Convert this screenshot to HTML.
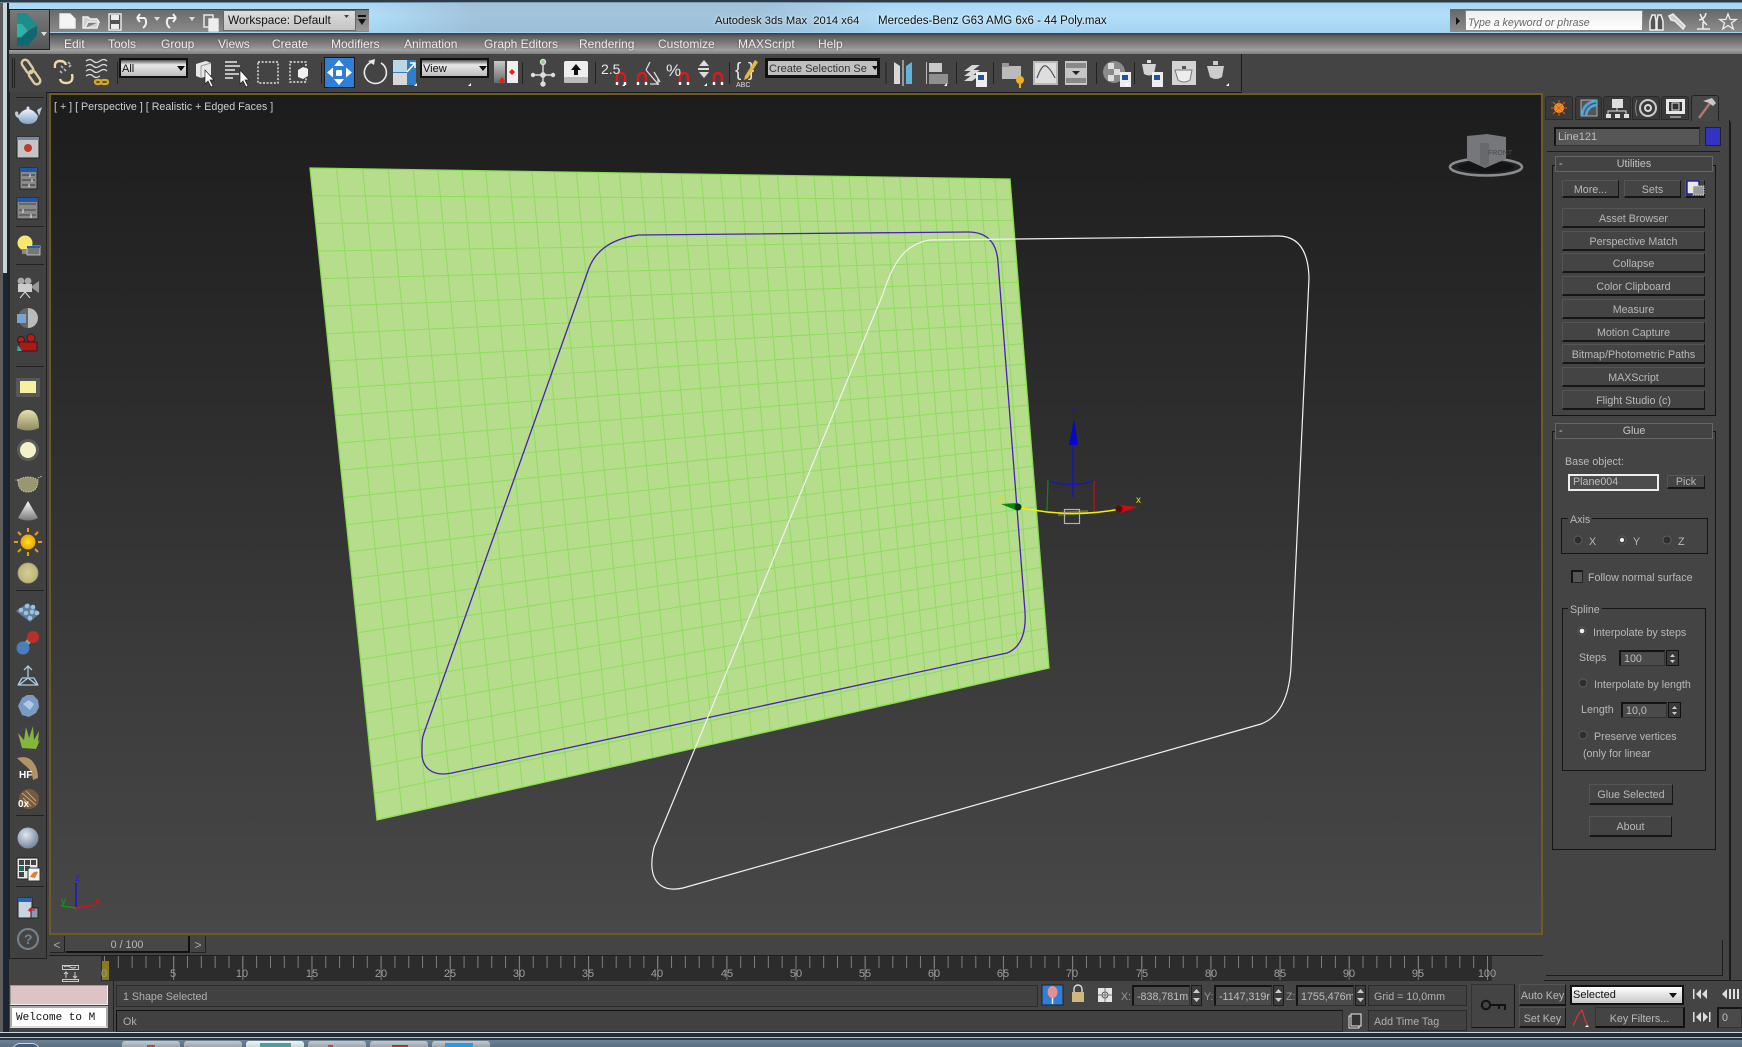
<!DOCTYPE html>
<html><head><meta charset="utf-8"><title>3ds Max</title>
<style>
html,body{margin:0;padding:0;background:#444;}
#r{position:relative;width:1742px;height:1047px;overflow:hidden;background:#444;font-family:"Liberation Sans",sans-serif;font-size:10.7px;color:#b8b8b8;}
#r div{position:absolute;box-sizing:border-box;}
.t{white-space:nowrap;line-height:14px;height:14px;margin-top:1px;}
#r .m{color:#ececec;font-size:12px;top:37px;text-shadow:0 0 2px #555;margin-top:0;}
.b{background:#444;border-top:1px solid #555;border-left:1px solid #555;border-right:1px solid #161616;border-bottom:2px solid #161616;text-align:center;white-space:nowrap;color:#b8b8b8;padding-top:2px;}
.f{background:#4a4a4a;border:1px solid #333;border-top:2px solid #141414;border-left:2px solid #141414;white-space:nowrap;color:#bdbdbd;padding-left:3px;overflow:hidden;}
.s{background:#414141;border:1px solid #2b2b2b;white-space:nowrap;color:#b0b0b0;padding-left:6px;line-height:19px;padding-top:1px;}
.dd{background:linear-gradient(#555 0,#e8e8e8 30%,#bcbcbc 100%);border:2px solid #111;color:#111;white-space:nowrap;padding-left:1px;padding-top:2px;overflow:hidden;}
.h{border:1px solid #666;background:#434343;text-align:center;color:#c4c4c4;line-height:15px;}
.g{border:1px solid #151515;}
.l{color:#9f9f9f;font-size:11px;top:966px;width:30px;text-align:center;}
.sep{background:#222;}
</style></head><body>
<div id="r">
<!-- title bar -->
<div style="left:0;top:0;width:1742px;height:33px;background:linear-gradient(#2c3c48 0,#2c3c48 2px,#a9d7f4 3px,#b2def9 16px,#a4d3f1 32px)"></div>
<div style="left:370px;top:2px;width:520px;height:30px;background:linear-gradient(90deg,rgba(150,175,195,0) 0,rgba(150,175,195,.55) 20%,rgba(150,175,195,.55) 75%,rgba(150,175,195,0) 100%)"></div>
<div class="t" style="left:715px;top:13px;font-size:11.2px;color:#111;text-shadow:0 0 3px #fff">Autodesk 3ds Max&nbsp; 2014 x64</div>
<div class="t" style="left:878px;top:13px;font-size:11.5px;color:#111;text-shadow:0 0 3px #fff">Mercedes-Benz G63 AMG 6x6 - 44 Poly.max</div>
<!-- left frame -->
<div style="left:0;top:3px;width:3px;height:1030px;background:#5c5c5c"></div>
<div style="left:3px;top:3px;width:4px;height:270px;background:#c9d3da"></div>
<div style="left:3px;top:273px;width:4px;height:760px;background:#1d2636"></div>
<div style="left:7px;top:3px;width:2px;height:1030px;background:#222"></div>
<!-- quick access -->
<div style="left:49px;top:9px;width:320px;height:23px;background:linear-gradient(#6b6b6b,#8a8a8a);border-top:1px solid #444"></div>
<div class="dd" style="left:223px;top:10px;width:133px;height:21px;border:1px solid #666;background:linear-gradient(#ddd,#c4c4c4);font-size:11.8px;line-height:19px;padding-left:4px;padding-top:0">Workspace: Default</div>
<div style="left:356px;top:10px;width:13px;height:21px;background:linear-gradient(#777,#999)"></div>
<!-- search strip -->
<div style="left:1450px;top:9px;width:292px;height:23px;background:linear-gradient(#666,#8e8e8e)"></div>
<div style="left:1465px;top:10px;width:178px;height:21px;background:linear-gradient(#eee,#fff);border:1px solid #888"></div>
<div class="t" style="left:1468px;top:15px;font-style:italic;color:#666;font-size:10.6px">Type a keyword or phrase</div>
<!-- menu bar -->
<div style="left:9px;top:33px;width:1733px;height:21px;background:linear-gradient(#3a3a3a 0,#5e5e5e 3px,#8a8a8a 13px,#a0a0a0 17px,#7e7e7e 21px)"></div>
<div class="t m" style="left:64px">Edit</div><div class="t m" style="left:108px">Tools</div><div class="t m" style="left:161px">Group</div><div class="t m" style="left:218px">Views</div><div class="t m" style="left:272px">Create</div><div class="t m" style="left:331px">Modifiers</div><div class="t m" style="left:404px">Animation</div><div class="t m" style="left:484px">Graph Editors</div><div class="t m" style="left:579px">Rendering</div><div class="t m" style="left:658px">Customize</div><div class="t m" style="left:738px">MAXScript</div><div class="t m" style="left:818px">Help</div>
<!-- app button -->
<div style="left:9px;top:9px;width:41px;height:41px;background:linear-gradient(#7a7a7a,#565656);border:1px solid #222"></div>
<!-- main toolbar -->
<div style="left:9px;top:54px;width:1233px;height:38px;background:#444;border-right:1px solid #1a1a1a;border-bottom:1px solid #161616"></div>
<div style="left:9px;top:91px;width:1733px;height:3px;background:#444;"></div>
<div style="left:9px;top:92px;width:1233px;height:1px;background:#161616"></div>
<div class="dd" style="left:119px;top:58px;width:69px;height:20px;line-height:15px;font-size:11px">All</div>
<div style="left:324px;top:57px;width:31px;height:31px;background:#2f7fd8;border:1px solid #1a1a1a"></div>
<div class="dd" style="left:420px;top:58px;width:69px;height:20px;line-height:15px;font-size:11px">View</div>
<div class="dd" style="left:765px;top:58px;width:115px;height:20px;border:3px solid #111;background:#c0c0c0;font-size:11px;line-height:13px;color:#333">Create Selection Se</div>
<!-- left bar -->
<div style="left:9px;top:92px;width:38px;height:867px;background:#414141;border-right:1px solid #222;border-bottom:1px solid #222;border-left:1px solid #222"></div>
<div class="sep" style="left:16px;top:97px;width:28px;height:1px"></div>
<div class="sep" style="left:16px;top:226px;width:28px;height:1px"></div>
<div class="sep" style="left:16px;top:264px;width:28px;height:1px"></div>
<div class="sep" style="left:16px;top:366px;width:28px;height:1px"></div>
<div class="sep" style="left:16px;top:590px;width:28px;height:1px"></div>
<div class="sep" style="left:16px;top:815px;width:28px;height:1px"></div>
<div class="sep" style="left:16px;top:886px;width:28px;height:1px"></div>
<!-- viewport -->
<div style="left:49px;top:93px;width:1494px;height:842px;border:2px solid #6f5b20;background:linear-gradient(#1c1c1c 0,#2e2e2e 40%,#3c3c3c 70%,#484848 100%)"></div>
<div class="t" style="left:54px;top:99px;color:#cfcfcf;font-size:10.7px">[ + ] [ Perspective ] [ Realistic + Edged Faces ]</div>
<svg style="position:absolute;left:0;top:0" width="1742" height="1047" viewBox="0 0 1742 1047">
<polygon points="310,168 1010,179 1049,668 377,820" fill="#b5dd8c" stroke="#86e04c" stroke-width="1.3"/>
<g id="grid" stroke="#8fdc5e" stroke-width="1" fill="none"></g>
<path d="M639 235 L968 232 Q996 232 998 262 L1025 612 Q1027 645 1007 653 L452 773 C432 777 421 768 422 750 C422 742 422 738 424 733 L589 268 Q600 240 639 235 Z" fill="none" stroke="#4a1fb8" stroke-width="1.3"/>
<path d="M930 240 L1278 236 Q1308 236 1309 278 L1291 667 Q1288 714 1261 724 L683 888 C660 893 648 880 653 852 C654 848 654 846 655 845 L883 294 C893 262 905 244 930 240 Z" fill="none" stroke="#f2f2f2" stroke-width="1.2"/>
<!-- gizmo -->
<path d="M1048 481 Q1072 488 1094 481" fill="none" stroke="#1414c8" stroke-width="1.3"/>
<path d="M1047 512 L1048 480" stroke="#0a8a0a" stroke-width="1.3"/><path d="M1094 513 L1094 481" stroke="#c80e0e" stroke-width="1.3"/>
<path d="M1058 512 L1088 510 L1088 514 L1058 516 Z" fill="#6b6a28"/>
<path d="M1020 508 L1047 512 Q1085 516 1120 509" fill="none" stroke="#f0f000" stroke-width="1.5"/>
<path d="M1073 497 L1073 440" stroke="#1414c8" stroke-width="1.4"/>
<polygon points="1074,419 1069,445 1078,445" fill="#0707c8"/>
<polygon points="1001,504 1018,503 1018,511" fill="#0a8a0a"/><circle cx="1018" cy="507" r="3.5" fill="#0c3a0c"/>
<polygon points="1138,507 1120,505 1120,513" fill="#c80e0e"/><circle cx="1119" cy="509" r="3.5" fill="#5a0c0c"/>
<rect x="1064.5" y="509.5" width="15" height="14" fill="none" stroke="#b0b0b0" stroke-width="1.2"/>
<text x="1072" y="414" font-size="10" fill="#1414c8" font-family="Liberation Sans">z</text>
<text x="998" y="502" font-size="10" fill="#e8e000" font-family="Liberation Sans">y</text>
<text x="1136" y="503" font-size="10" fill="#e8e000" font-family="Liberation Sans">x</text>
<!-- viewcube -->
<ellipse cx="1486" cy="167" rx="36" ry="8.5" fill="none" stroke="#8a8d90" stroke-width="2.6"/>
<ellipse cx="1486" cy="167" rx="28" ry="5.5" fill="#141414"/>
<polygon points="1467,136 1487,134 1506,137 1506,159 1485,168 1467,160" fill="#76777a"/>
<polygon points="1480,143 1489,143 1489,165 1485,167 1480,165" fill="#68696c"/>
<text x="1488" y="155" font-size="7" fill="#4a4a4a" font-family="Liberation Sans">FRONT</text>
<!-- tripod -->
<path d="M76 908 L76 883" stroke="#1414e0" stroke-width="1.4"/><path d="M76 908 L62 906" stroke="#0a9a0a" stroke-width="1.4"/><path d="M76 908 L96 905" stroke="#e00e0e" stroke-width="1.4"/>
<text x="75" y="881" font-size="10" fill="#2020e8" font-family="Liberation Sans">z</text>
<text x="61" y="904" font-size="10" fill="#12a012" font-family="Liberation Sans">y</text>
<text x="95" y="904" font-size="10" fill="#e01010" font-family="Liberation Sans">x</text>
</svg>
<!-- right panel -->
<div style="left:1545px;top:120px;width:185px;height:860px;background:#444;border-right:1px solid #1a1a1a"></div>
<div style="left:1730px;top:122px;width:1px;height:858px;background:#1a1a1a"></div>
<div style="left:1545px;top:96px;width:28px;height:24px;background:#3a3a3a;border:1px solid #2a2a2a;border-radius:3px 3px 0 0"></div>
<div style="left:1575px;top:96px;width:27px;height:24px;background:#3a3a3a;border:1px solid #2a2a2a;border-radius:3px 3px 0 0"></div>
<div style="left:1603px;top:96px;width:28px;height:24px;background:#3a3a3a;border:1px solid #2a2a2a;border-radius:3px 3px 0 0"></div>
<div style="left:1632px;top:96px;width:28px;height:24px;background:#3a3a3a;border:1px solid #2a2a2a;border-radius:3px 3px 0 0"></div>
<div style="left:1661px;top:96px;width:28px;height:24px;background:#3a3a3a;border:1px solid #2a2a2a;border-radius:3px 3px 0 0"></div>
<div style="left:1691px;top:95px;width:28px;height:26px;background:#474747;border:1px solid #222;border-bottom:none;border-radius:3px 3px 0 0"></div>
<div class="f" style="left:1554px;top:127px;width:146px;height:19px;line-height:16px;padding-left:2px;font-size:11px;background:#565656">Line121</div>
<div style="left:1705px;top:127px;width:16px;height:19px;background:#3333c2;border:1px solid #222"></div>
<div style="left:1547px;top:151px;width:173px;height:1px;background:#1c1c1c"></div>
<!-- utilities rollout -->
<div class="g" style="left:1552px;top:165px;width:164px;height:251px"></div>
<div class="h" style="left:1555px;top:156px;width:158px;height:16px"><span style="position:absolute;left:3px">-</span>Utilities</div>
<div class="b" style="left:1562px;top:180px;width:57px;height:18px;line-height:15px">More...</div>
<div class="b" style="left:1624px;top:180px;width:57px;height:18px;line-height:15px">Sets</div>
<div class="b" style="left:1685px;top:180px;width:20px;height:18px"></div>
<div class="b" style="left:1562px;top:208px;width:143px;height:20px;line-height:17px">Asset Browser</div>
<div class="b" style="left:1562px;top:231px;width:143px;height:20px;line-height:17px">Perspective Match</div>
<div class="b" style="left:1562px;top:253px;width:143px;height:20px;line-height:17px">Collapse</div>
<div class="b" style="left:1562px;top:276px;width:143px;height:20px;line-height:17px">Color Clipboard</div>
<div class="b" style="left:1562px;top:299px;width:143px;height:20px;line-height:17px">Measure</div>
<div class="b" style="left:1562px;top:322px;width:143px;height:20px;line-height:17px">Motion Capture</div>
<div class="b" style="left:1562px;top:344px;width:143px;height:20px;line-height:17px">Bitmap/Photometric Paths</div>
<div class="b" style="left:1562px;top:367px;width:143px;height:20px;line-height:17px">MAXScript</div>
<div class="b" style="left:1562px;top:390px;width:143px;height:20px;line-height:17px">Flight Studio (c)</div>
<!-- glue rollout -->
<div class="g" style="left:1552px;top:431px;width:164px;height:419px"></div>
<div class="h" style="left:1555px;top:423px;width:158px;height:16px"><span style="position:absolute;left:3px">-</span>Glue</div>
<div class="t" style="left:1565px;top:454px">Base object:</div>
<div style="left:1568px;top:474px;width:91px;height:17px;border:2px solid #eee;background:#4c4c4c;line-height:13px;padding-left:3px;color:#bdbdbd">Plane004</div>
<div class="b" style="left:1667px;top:475px;width:38px;height:14px;line-height:11px;padding-top:1px">Pick</div>
<div class="g" style="left:1561px;top:518px;width:147px;height:36px"></div>
<div class="t" style="left:1568px;top:512px;background:#444;padding:0 2px">Axis</div>
<div class="t" style="left:1589px;top:534px">X</div><div class="t" style="left:1633px;top:534px">Y</div><div class="t" style="left:1678px;top:534px">Z</div>
<div style="left:1571px;top:570px;width:12px;height:13px;background:#555;border:1px solid #222;border-top:2px solid #141414;border-left:2px solid #141414"></div>
<div class="t" style="left:1588px;top:570px">Follow normal surface</div>
<div class="g" style="left:1562px;top:608px;width:144px;height:163px"></div>
<div class="t" style="left:1568px;top:602px;background:#444;padding:0 2px">Spline</div>
<div class="t" style="left:1593px;top:625px">Interpolate by steps</div>
<div class="t" style="left:1579px;top:650px">Steps</div>
<div class="f" style="left:1619px;top:650px;width:46px;height:16px;line-height:14px">100</div>
<div class="t" style="left:1594px;top:677px">Interpolate by length</div>
<div class="t" style="left:1581px;top:702px">Length</div>
<div class="f" style="left:1621px;top:702px;width:46px;height:16px;line-height:14px">10,0</div>
<div class="t" style="left:1594px;top:729px">Preserve vertices</div>
<div class="t" style="left:1583px;top:746px">(only for linear</div>
<div class="b" style="left:1589px;top:784px;width:84px;height:21px;line-height:18px;padding-top:1px">Glue Selected</div>
<div class="b" style="left:1589px;top:816px;width:83px;height:21px;line-height:18px;padding-top:1px">About</div>
<div style="left:1546px;top:975px;width:176px;height:1px;background:#1c1c1c"></div>
<div style="left:1722px;top:940px;width:1px;height:36px;background:#1c1c1c"></div>
<div style="left:1544px;top:980px;width:198px;height:1px;background:#1c1c1c"></div>
<!-- time slider -->
<div style="left:50px;top:936px;width:15px;height:17px;background:#444;border-right:1px solid #222;border-bottom:1px solid #222;text-align:center;line-height:18px;color:#aaa;font-size:12px">&lt;</div>
<div style="left:66px;top:936px;width:124px;height:17px;background:#474747;border-right:2px solid #111;border-bottom:2px solid #111;text-align:center;line-height:19px;color:#b8b8b8">0 / 100</div>
<div style="left:191px;top:936px;width:15px;height:17px;background:#444;border-right:1px solid #222;border-bottom:1px solid #222;text-align:center;line-height:18px;color:#aaa;font-size:12px">&gt;</div>
<div style="left:49px;top:955px;width:1494px;height:1px;background:#1c1c1c"></div>
<!-- timeline -->
<div style="left:101px;top:956px;width:1391px;height:25px;background:#2c2c2c"></div>
<svg style="position:absolute;left:0;top:0" width="1742" height="1047" viewBox="0 0 1742 1047">
<defs>
<pattern id="tk" x="104" y="956" width="13.83" height="12" patternUnits="userSpaceOnUse"><rect x="0" y="0" width="1" height="12" fill="#7d7d7d"/></pattern>
<pattern id="tm" x="104" y="956" width="69.15" height="24" patternUnits="userSpaceOnUse"><rect x="0" y="0" width="1" height="24" fill="#7d7d7d"/></pattern>
<radialGradient id="sb" cx=".4" cy=".35" r=".7"><stop offset="0" stop-color="#dfe8f2"/><stop offset="1" stop-color="#6d7f95"/></radialGradient>
<radialGradient id="sy" cx=".5" cy=".5" r=".55"><stop offset="0" stop-color="#ffe02a"/><stop offset="1" stop-color="#e8a000"/></radialGradient>
<radialGradient id="sd" cx=".5" cy=".5" r=".55"><stop offset="0" stop-color="#d8cf90"/><stop offset=".8" stop-color="#bfb680"/><stop offset="1" stop-color="#665f3f"/></radialGradient>
<linearGradient id="dm" x1="0" x2="0" y1="0" y2="1"><stop offset="0" stop-color="#e4dfac"/><stop offset="1" stop-color="#8f8a60"/></linearGradient>
<linearGradient id="sp" x1="0" x2="0" y1="0" y2="1"><stop offset="0" stop-color="#fff"/><stop offset="1" stop-color="#777"/></linearGradient>
<linearGradient id="tp" x1="0" x2="0" y1="0" y2="1"><stop offset="0" stop-color="#eef4fa"/><stop offset="1" stop-color="#7fa4c8"/></linearGradient>
<linearGradient id="pv" x1="0" x2="0" y1="0" y2="1"><stop offset="0" stop-color="#c8c8c8"/><stop offset="1" stop-color="#6a6a6a"/></linearGradient>
</defs>
<rect x="104" y="956" width="1384" height="12" fill="url(#tk)"/><rect x="104" y="956" width="1384" height="24" fill="url(#tm)"/>
<rect x="102" y="961" width="7" height="19" fill="#8a7a1e"/>
<!-- app logo -->
<path d="M17 13 L27 13 L37 25 L28 30 L22 23 L17 23 Z" fill="#1a8f8a"/><path d="M17 24 L22 24 L28 31 L21 37 L17 37 Z" fill="#27b5a8"/><path d="M28 31 L37 26 L37 35 L28 46 L17 46 L17 38 L21 38 Z" fill="#0e6a70"/>
<path d="M41 32 L47 32 L44 36 Z" fill="#ddd"/>
<!-- quick access icons -->
<g fill="none" stroke="#f0f0f0" stroke-width="1.4">
<path d="M60 14 H70 L75 19 V28 H60 Z" fill="#f4f4f4"/>
<path d="M83 28 V17 H88 L90 19 H97 L99 22 H88 L85 28 Z M85 28 H97 L99 22" fill="#d0d0d0" stroke="#eee"/>
<rect x="109" y="14" width="12" height="16" fill="#555"/><rect x="111" y="15" width="8" height="5" fill="#eee" stroke="none"/><rect x="111" y="24" width="8" height="5" fill="#eee" stroke="none"/>
<path d="M145 18 H137 M137 18 L140 14 M137 18 L140 22 M145 18 Q148 24 143 28" stroke-width="2"/>
<path d="M168 18 H176 M176 18 L173 14 M176 18 L173 22 M168 18 Q165 24 170 28" stroke-width="2"/>
<rect x="204" y="15" width="9" height="12" fill="#777"/><rect x="209" y="19" width="9" height="12" fill="#eee" stroke="#eee"/>
</g>
<path d="M154 17 h6 l-3 4z M189 17 h6 l-3 4z" fill="#ddd"/>
<path d="M344 15 h5 l-2.5 3z" fill="#444"/>
<rect x="358" y="15" width="8" height="2" fill="#111"/><path d="M358 19 h8 l-4 6z" fill="#111"/>
<path d="M1456 17 l4 4 l-4 4z" fill="#111"/>
<!-- search icons -->
<g fill="none" stroke="#eee" stroke-width="1.5">
<path d="M1650 30 v-9 l2-6 h3 l1 6 v9 h-6 z M1657 30 v-9 l1-6 h3 l2 6 v9 h-6 z" fill="#555"/>
<path d="M1673 14 l4 4 l8 8 l-2 3 l-8-8 l-4-1 l-2-4 z" fill="#ccc" stroke="#eee"/>
<path d="M1700 14 l4 8 l3 3 M1706 13 q-1 6 -7 7 M1697 29 h13 M1703 22 v7"/>
<path d="M1728 14 l2.2 5.5 h6 l-4.7 3.5 l1.8 6 l-5.3-3.5 l-5.3 3.5 l1.8-6 l-4.7-3.5 h6 z" stroke-width="1.3"/>
</g>
<!-- main toolbar icons -->
<rect x="12" y="58" width="1" height="30" fill="#222"/><rect x="14" y="58" width="1" height="30" fill="#222"/>
<g fill="none" stroke="#dcc9a0" stroke-width="2.4">
<rect x="20" y="63" width="15" height="7" rx="3.5" transform="rotate(55 27.5 66.5)"/><rect x="27" y="74" width="15" height="7" rx="3.5" transform="rotate(55 34.5 77.5)"/>
<path d="M55 68 q-1-7 5-7 q5 0 6 4 M72 74 q2 9 -6 9 q-5 0-6-4" stroke="#f0d8a8"/>
</g>
<path d="M60 71 l2 2 M64 69 l2 2 M61 66 l2 2" stroke="#bbb" stroke-width="1.6"/><path d="M68 62 l2 2 M71 65 l-2 2" stroke="#bbb" stroke-width="1.6"/>
<g fill="none" stroke="#ddd" stroke-width="1.3"><path d="M86 61 q4-3 7 0 t7 0 t7 0 M86 66 q4-3 7 0 t7 0 t7 0 M86 71 q4-3 7 0 t7 0 t7 0 M86 76 q4-3 7 0 t7 0"/></g>
<rect x="95" y="80" width="6" height="4" rx="2" fill="none" stroke="#d8a820" stroke-width="2.2"/><rect x="101" y="80" width="7" height="4" rx="2" fill="none" stroke="#d8a820" stroke-width="2.2"/>
<rect x="117" y="62" width="1" height="22" fill="#222"/>
<path d="M196 64 l10-3 l5 2 v12 l-10 3 l-5-2z" fill="#e8e8e8"/><path d="M201 66 v12 M201 66 l10-3" stroke="#999" fill="none"/>
<path d="M205 70 l0 14 l3-3 l3 6 l2-1 l-3-6 h4z" fill="#fff" stroke="#222" stroke-width=".7"/>
<g stroke="#e8e8e8" stroke-width="1.6"><path d="M225 62 h12 M225 66 h15 M225 70 h10 M225 74 h14 M225 78 h8"/></g>
<path d="M240 70 l0 14 l3-3 l3 6 l2-1 l-3-6 h4z" fill="#fff" stroke="#222" stroke-width=".7"/>
<rect x="258" y="62" width="20" height="21" fill="none" stroke="#e8e8e8" stroke-width="1.4" stroke-dasharray="2 1.6"/>
<rect x="290" y="62" width="16" height="20" fill="none" stroke="#e8e8e8" stroke-width="1.4" stroke-dasharray="2 1.6"/>
<path d="M298 70 l5-3 l5 2 v7 l-5 3 l-5-2z" fill="#f0f0f0"/>
<rect x="321" y="62" width="1" height="22" fill="#222"/>
<g fill="#fff"><path d="M339 60 l5 6 h-10z M339 85 l5-6 h-10z M327 72.5 l6-5 v10z M352 72.5 l-6-5 v10z"/><rect x="336" y="70" width="6" height="6" rx="1"/></g>
<path d="M381 63 a11 11 0 1 1 -9 -1" fill="none" stroke="#e8e8e8" stroke-width="1.6"/><path d="M368 61 l7-2 l-1 6z" fill="#e8e8e8"/>
<rect x="393" y="60" width="23" height="25" fill="#2f7fc8"/><rect x="393" y="60" width="14" height="12" fill="#bcd6e8"/><rect x="393" y="73" width="14" height="12" fill="#d8d8d8"/><path d="M407 72 l8-9 m-5 0 h5 v5" fill="none" stroke="#fff" stroke-width="1.5"/>
<path d="M414 86 l3-3 v3z" fill="#fff"/>
<rect x="494" y="61" width="11" height="22" fill="url(#pv)"/><rect x="507" y="61" width="11" height="22" fill="#eee"/><path d="M499 81 l3-4 l3 4 l-3 3z" fill="#e81c1c"/><path d="M512 69 l-3 3 l3 3 l3-3z" fill="#e81c1c"/>
<rect x="522" y="62" width="1" height="22" fill="#222"/>
<g stroke="#ddd" stroke-width="1.4" fill="#ddd"><path d="M543 64 v22 M532 75 h22"/><circle cx="543" cy="62" r="2.5" fill="#8c8"/><circle cx="533" cy="75" r="1.5"/><circle cx="553" cy="75" r="1.5"/><circle cx="543" cy="84" r="2"/><circle cx="543" cy="75" r="2.2"/></g>
<rect x="564" y="61" width="24" height="20" rx="2" fill="#eee"/><rect x="564" y="77" width="24" height="6" rx="1" fill="#bbb"/><path d="M576 64 l5 6 h-3 v5 h-4 v-5 h-3z" fill="#111"/>
<rect x="595" y="62" width="1" height="22" fill="#222"/>
<g fill="none" stroke="#e01818" stroke-width="2.4"><path d="M617 85 v-8 a4 4 0 0 1 8 0 v8 M638 85 v-8 a4 4 0 0 1 8 0 v8 M680 85 v-8 a4 4 0 0 1 8 0 v8 M714 85 v-8 a4 4 0 0 1 8 0 v8"/></g>
<g fill="#fff"><rect x="615.8" y="82" width="2.4" height="3"/><rect x="623.8" y="82" width="2.4" height="3"/><rect x="636.8" y="82" width="2.4" height="3"/><rect x="644.8" y="82" width="2.4" height="3"/><rect x="678.8" y="82" width="2.4" height="3"/><rect x="686.8" y="82" width="2.4" height="3"/><rect x="712.8" y="82" width="2.4" height="3"/><rect x="720.8" y="82" width="2.4" height="3"/></g>
<text x="601" y="74" font-size="14" fill="#e8e8e8" font-family="Liberation Sans">2.5</text>
<path d="M650 62 l-4 8 M646 70 l12 14 h-8 M654 72 l6 10 M658 79 v6" fill="none" stroke="#ddd" stroke-width="1.3"/>
<text x="666" y="76" font-size="17" fill="#e8e8e8" font-family="Liberation Sans">%</text>
<path d="M699 66 h10 l-5-6z" fill="#ddd"/><rect x="698" y="68" width="11" height="2" fill="#ddd"/><path d="M699 72 h10 l-5 6z" fill="#ddd"/>
<rect x="729" y="62" width="1" height="22" fill="#222"/>
<text x="735" y="76" font-size="19" fill="#e8e8e8" font-family="Liberation Sans">{</text><text x="748" y="76" font-size="19" fill="#e8e8e8" font-family="Liberation Sans">}</text>
<path d="M745 76 l10-16 l3 2 l-10 16 l-4 2z" fill="#e8b83a"/><text x="736" y="87" font-size="7" fill="#ddd" font-family="Liberation Sans">ABC</text>
<path d="M177 66 h8 l-4 5z M479 66 h8 l-4 5z" fill="#111"/><path d="M872 66 h6 l-3 4z" fill="#111"/>
<path d="M886 62 v22" stroke="#222"/><path d="M894 62 l6 4 v18 h-6z" fill="#d8d8d8"/><path d="M912 62 l-6 4 v18 h6z" fill="#5fb4dc"/><path d="M903 60 v26" stroke="#eee"/>
<rect x="926" y="62" width="1" height="22" fill="#bbb"/><rect x="929" y="63" width="13" height="9" fill="#c8c8c8"/><rect x="929" y="74" width="19" height="10" fill="#8f8f8f"/>
<rect x="956" y="62" width="1" height="22" fill="#222"/>
<g fill="#d8d8d8"><path d="M964 71 l8-6 h8 l-8 6z M964 76 l8-6 h8 l-8 6z M964 81 l8-6 h8 l-8 6z"/></g><rect x="976" y="72" width="11" height="15" fill="#eee"/><rect x="978" y="75" width="6" height="5" fill="#1e4fb0"/>
<rect x="993" y="62" width="1" height="22" fill="#222"/>
<rect x="1002" y="66" width="19" height="13" fill="#bbb"/><rect x="1002" y="63" width="7" height="4" fill="#999"/><circle cx="1020" cy="80" r="4" fill="#f0b020"/><path d="M1020 84 v4" stroke="#f0b020" stroke-width="2"/>
<rect x="1033" y="61" width="25" height="24" fill="#b8b8b8"/><rect x="1035" y="63" width="21" height="20" fill="#dedede"/><path d="M1037 78 q5-14 9-12 q4 2 9 12" fill="none" stroke="#555" stroke-width="1.2"/>
<rect x="1065" y="61" width="22" height="24" fill="#c6c6c6"/><rect x="1066" y="63" width="20" height="5" fill="#888"/><rect x="1066" y="78" width="20" height="5" fill="#888"/><path d="M1072 71 h8 l-4 4z" fill="#222"/>
<rect x="1096" y="62" width="1" height="22" fill="#222"/>
<circle cx="1114" cy="72" r="11" fill="#8a8a8a"/><path d="M1108 63 h6 v6 h-6z M1114 69 h6 v6 h-6z M1108 75 h6 v6 h-6z" fill="#ddd"/><rect x="1120" y="72" width="11" height="15" fill="#eee"/><rect x="1122" y="75" width="6" height="5" fill="#1e4fb0"/>
<rect x="1134" y="62" width="1" height="22" fill="#222"/>
<path d="M1142 64 h14 l-2 10 q-5 3 -10 0z" fill="#d2d2d2"/><rect x="1147" y="60" width="4" height="3" fill="#ddd"/><rect x="1152" y="72" width="11" height="15" fill="#eee"/><rect x="1154" y="75" width="6" height="5" fill="#1e4fb0"/>
<rect x="1172" y="61" width="24" height="24" fill="#d4d4d4"/><path d="M1175 70 h17 l-2 10 q-6 4 -12 0z" fill="#eee" stroke="#777"/><rect x="1182" y="66" width="4" height="3" fill="#555"/>
<path d="M1207 66 h17 l-2 11 q-6 4 -12 0z" fill="#ccc"/><rect x="1213" y="61" width="5" height="4" fill="#ccc"/><path d="M1226 86 l3-3 v3z" fill="#fff"/><path d="M468 86 l3-3 v3z M704 86 l3-3 v3z M622 86 l3-3 v3z M1125 86 l3-3 v3z M944 86 l3-3 v3z" fill="#fff"/>
<!-- tabs icons -->
<circle cx="1559" cy="108" r="5" fill="#f0a020"/><circle cx="1559" cy="108" r="2.5" fill="#fff0a0"/><path d="M1559 100 v16 M1551 108 h16 M1553 102 l12 12 M1565 102 l-12 12" stroke="#e06010" stroke-width="1"/>
<rect x="1581" y="100" width="16" height="16" fill="#555" stroke="#ddd" stroke-width=".7"/><path d="M1582 116 q1-14 15-15 M1586 116 q1-10 11-11" fill="none" stroke="#4aa8e0" stroke-width="2.6"/>
<rect x="1612" y="99" width="11" height="9" fill="#ddd"/><path d="M1617 108 v3 M1608 115 v-4 h18 v4" stroke="#ddd" fill="none"/><rect x="1606" y="114" width="5" height="4" fill="#ddd"/><rect x="1615" y="114" width="5" height="4" fill="#ddd"/><rect x="1624" y="114" width="5" height="4" fill="#ddd"/>
<circle cx="1648" cy="108" r="8" fill="none" stroke="#ccc" stroke-width="2"/><circle cx="1648" cy="108" r="3" fill="none" stroke="#ddd" stroke-width="2"/><path d="M1637 100 q-3 8 0 16" stroke="#888" fill="none"/>
<rect x="1666" y="99" width="19" height="15" fill="#e8e8e8"/><rect x="1669" y="102" width="13" height="9" fill="#333"/><rect x="1672" y="103" width="7" height="7" fill="none" stroke="#ddd"/><path d="M1670 117 h11" stroke="#ddd"/>
<path d="M1699 118 l11-15" stroke="#b07870" stroke-width="2.4"/><path d="M1703 101 l9-3 l4 5 l-3 3 l-4-3 z" fill="#c8c8c8"/>
<!-- utilities small icon -->
<rect x="1687" y="181" width="12" height="13" fill="#e8e8e8" stroke="#1818a0" stroke-width="1.4"/><rect x="1693" y="186" width="11" height="9" fill="#999" stroke="#ddd" stroke-dasharray="1.5 1"/>
<!-- radios -->
<g fill="#2e2e2e" stroke="#5e5e5e"><circle cx="1578" cy="540" r="4"/><circle cx="1622" cy="540" r="4"/><circle cx="1667" cy="540" r="4"/><circle cx="1582" cy="631" r="4"/><circle cx="1583" cy="683" r="4"/><circle cx="1583" cy="735" r="4"/></g>
<circle cx="1622" cy="540" r="2.2" fill="#eee"/><circle cx="1582" cy="631" r="2.4" fill="#eee"/>
<!-- spinners -->
<g fill="#3a3a3a" stroke="#111"><rect x="1666.5" y="650.5" width="12" height="15"/><rect x="1668.5" y="702.5" width="12" height="15"/></g>
<path d="M1670 657 l2.5-3 l2.5 3z M1670 660 l2.5 3 l2.5-3z M1672 709 l2.5-3 l2.5 3z M1672 712 l2.5 3 l2.5-3z" fill="#ccc"/>
<!-- left toolbar icons -->
<path d="M18 116 q10-14 20 0 q-1 8 -10 8 q-9 0 -10-8z" fill="url(#tp)"/><path d="M37 110 l5-3 l-3 9z M18 112 q-3-2 -3 2 q1 4 4 4" fill="#b8cde0"/><circle cx="28" cy="108" r="1.5" fill="#dde"/>
<rect x="17" y="137" width="22" height="21" fill="#c4c4c4" stroke="#222"/><rect x="17" y="137" width="22" height="3" fill="#7788aa"/><circle cx="28" cy="148" r="4" fill="#c0392b"/>
<rect x="20" y="168" width="17" height="21" fill="#8a8a8a" stroke="#222"/><rect x="20" y="168" width="17" height="4" fill="#1e58a8"/><path d="M22 175 h13 M22 180 h13 M22 185 h13" stroke="#333"/><path d="M30 174 v3 M32 179 v3 M29 184 v3" stroke="#eee"/>
<rect x="17" y="198" width="21" height="21" fill="#8a8a8a" stroke="#222"/><rect x="17" y="198" width="21" height="4" fill="#1e58a8"/><path d="M19 204 h17 M19 210 h17 M19 215 h17" stroke="#444"/><path d="M23 209 v4 M31 214 v4" stroke="#eee"/>
<circle cx="25" cy="243" r="7.5" fill="#f5e86a"/><rect x="22" y="249" width="6" height="5" fill="#888"/><rect x="27" y="246" width="13" height="9" fill="#777" stroke="#ddd" stroke-width=".7"/><rect x="27" y="246" width="13" height="2" fill="#2060b0"/>
<circle cx="21" cy="281" r="3.4" fill="#aaa"/><circle cx="28" cy="281" r="3.4" fill="#aaa"/><rect x="18" y="284" width="14" height="8" fill="#ccc"/><path d="M32 286 l7-5 v12 l-7-5z" fill="#999"/><path d="M25 292 l-5 6 M25 292 l5 6" stroke="#ddd"/>
<path d="M28 308 a10 10 0 0 1 0 20z" fill="#bbb"/><path d="M28 308 a10 10 0 0 0 0 20z" fill="#666"/><rect x="17" y="314" width="9" height="9" fill="#7aa4d0"/>
<circle cx="21" cy="340" r="3.5" fill="#c01818" stroke="#222"/><circle cx="31" cy="338" r="4" fill="#c01818" stroke="#222"/><rect x="19" y="342" width="18" height="9" fill="#b01818" stroke="#222"/><path d="M18 345 l-1 6 h5z" fill="#3aa"/>
<rect x="16" y="378" width="24" height="19" fill="#666" opacity=".6"/><rect x="20" y="381" width="16" height="12" fill="#f6f0a0"/>
<path d="M17 428 C17 415 21 410 28 410 C35 410 39 415 39 428 Q28 433 17 428z" fill="url(#dm)"/>
<circle cx="28" cy="450" r="11" fill="#666" opacity=".7"/><circle cx="28" cy="450" r="8" fill="#f4f0c8"/>
<path d="M18 480 q10 -6 20 0 q0 12 -10 12 q-10 0 -10-12z M38 478 l4-2 M18 480 l-3 0" fill="#9a9670" stroke="#cbc7a0" stroke-dasharray="1.5 1"/>
<path d="M28 501 l10 17 q-10 5 -20 0z" fill="url(#sp)"/>
<circle cx="28" cy="542" r="7.5" fill="url(#sy)"/><path d="M28 532 v-4 M28 552 v4 M18 542 h-4 M38 542 h4 M21 535 l-3-3 M35 535 l3-3 M21 549 l-3 3 M35 549 l3 3" stroke="#e4a010" stroke-width="2"/>
<circle cx="28" cy="573" r="10.5" fill="url(#sd)"/>
<path d="M16 611 l12-8 l12 10 l-10 9z" fill="#5f7f9f"/><g fill="#9cc0de"><circle cx="21" cy="610" r="2.3"/><circle cx="27" cy="606" r="2.3"/><circle cx="33" cy="607" r="2.3"/><circle cx="26" cy="613" r="2.3"/><circle cx="32" cy="612" r="2.3"/><circle cx="37" cy="613" r="2.3"/><circle cx="30" cy="618" r="2.3"/></g>
<path d="M23 647 l10-10" stroke="#999" stroke-width="5"/><circle cx="23" cy="648" r="6.5" fill="#4a7eb8"/><circle cx="33" cy="637" r="6" fill="#b83028"/>
<g fill="none" stroke="#a8cce4" stroke-width="1.3"><path d="M28 666 v11 M24 670 l4-4 l4 4 M19 685 l9-7 l9 7z M22 678 h12 L38 685 M18 685 l4-7"/></g>
<path d="M18 706 l4-8 l5-3 l6 0 l5 5 l1 7 l-3 6 l-7 4 l-7-2 z" fill="#7a9cc4"/><path d="M23 704 l6-4 l5 4 l-4 6z" fill="#b0cbe8"/>
<path d="M22 748 l-4-15 l6 7 l2-13 l3 11 l4-12 l1 14 l5-9 l-1 11 l2-2 l-4 9z" fill="#84b63c"/>
<path d="M17 758 q11-3 16 4 q5 6 5 16 l-5 2 q-1-9 -6-13 q-5-4 -10-9z" fill="#b09468"/><text x="19" y="778" font-size="10" fill="#fff" font-family="Liberation Sans" font-weight="bold">HF</text>
<circle cx="29" cy="799" r="10" fill="#75593c"/><path d="M22 793 l14 12 M26 791 l10 10 M23 798 l8 8" stroke="#c8a880"/><text x="18" y="807" font-size="10" fill="#fff" font-family="Liberation Sans" font-weight="bold">0x</text>
<circle cx="28" cy="838" r="10.5" fill="url(#sb)"/>
<rect x="17" y="858" width="21" height="21" fill="#e8e8e8" stroke="#222"/><g fill="#444"><rect x="19" y="860" width="5" height="5"/><rect x="25" y="860" width="5" height="5"/><rect x="31" y="860" width="5" height="5"/><rect x="19" y="866" width="5" height="5" fill="#1d6a5e"/><rect x="25" y="866" width="5" height="5"/><rect x="19" y="872" width="5" height="5"/></g><rect x="28" y="868" width="12" height="13" fill="#f4f4f4" stroke="#333"/><path d="M30 877 q4-7 8-5 l-3 6z" fill="#e0802a"/>
<rect x="18" y="898" width="14" height="20" fill="#c8d4e0" stroke="#222"/><rect x="18" y="898" width="14" height="4" fill="#2a64b4"/><rect x="31" y="908" width="7" height="10" fill="#8a9cb0" stroke="#222"/><path d="M35 910 h-6 l2-2 m-2 2 l2 2" stroke="#e02020" fill="none" stroke-width="1.3"/>
<circle cx="28" cy="939" r="10" fill="#444" stroke="#77838f" stroke-width="2"/><text x="24" y="944" font-size="14" fill="#77838f" font-family="Liberation Sans" font-weight="bold">?</text>
<!-- timeline icon -->
<g fill="none" stroke="#ccc"><rect x="62.5" y="965.5" width="16" height="4"/><path d="M64 967 q3-2 6 0 t6 0"/><path d="M66 972 v6 M64 974 l2-2 l2 2 M75 972 v6 M73 976 l2 2 l2-2"/><rect x="62.5" y="979.5" width="16" height="2"/></g>
<!-- status icons -->
<rect x="1042" y="985" width="21" height="20" fill="#2f7fd8" stroke="#222"/><ellipse cx="1052.5" cy="992" rx="5" ry="6" fill="#e89090"/><path d="M1052.5 998 v6" stroke="#eee" stroke-width="1.5"/>
<path d="M1074 992 v-3 a4 4 0 0 1 8 0 v3" fill="none" stroke="#ddd" stroke-width="1.4"/><rect x="1072" y="992" width="12" height="10" fill="#d0b780"/>
<rect x="1098" y="988" width="14" height="14" fill="#e4e4e4"/><circle cx="1105" cy="995" r="3" fill="none" stroke="#555"/><path d="M1105 988 v14 M1098 995 h14" stroke="#777"/>
<g fill="#3c3c3c" stroke="#1c1c1c"><rect x="1191.5" y="985.5" width="10" height="20"/><rect x="1273.5" y="985.5" width="10" height="20"/><rect x="1355.5" y="985.5" width="10" height="20"/></g>
<path d="M1193 993 l3.5-4 l3.5 4z M1193 998 l3.5 4 l3.5-4z M1275 993 l3.5-4 l3.5 4z M1275 998 l3.5 4 l3.5-4z M1357 993 l3.5-4 l3.5 4z M1357 998 l3.5 4 l3.5-4z" fill="#ccc"/>
<rect x="1349" y="1016" width="10" height="12" fill="#222" stroke="#eee"/><rect x="1351" y="1014" width="10" height="12" fill="#333" stroke="#eee"/>
<path d="M1573 1026 l5-11 l4 -5 q2 6 3 10 l3 6" fill="none" stroke="#d03838" stroke-width="1.2"/><path d="M1585 1027 h4 l-2-2z" fill="#fff"/>
<g fill="#ddd"><path d="M1693 989 h1.5 v10 h-1.5z M1696 994 l5-5 v10z M1702 994 l5-5 v10z"/><path d="M1722 994 l5-5 v10z M1729 989 h2 v10 h-2z M1733 989 h2 v10 h-2z M1737 989 h2 v10 h-2z"/><path d="M1693 1012 h1.5 v10 h-1.5z M1696 1017 l5-5 v10z M1708 1017 l-5-5 v10z M1709 1012 h1.5 v10 h-1.5z"/></g>
</svg>
<!-- timeline labels -->
<div class="t l" style="left:89px">0</div><div class="t l" style="left:158px">5</div><div class="t l" style="left:227px">10</div><div class="t l" style="left:297px">15</div><div class="t l" style="left:366px">20</div><div class="t l" style="left:435px">25</div><div class="t l" style="left:504px">30</div><div class="t l" style="left:573px">35</div><div class="t l" style="left:642px">40</div><div class="t l" style="left:712px">45</div><div class="t l" style="left:781px">50</div><div class="t l" style="left:850px">55</div><div class="t l" style="left:919px">60</div><div class="t l" style="left:988px">65</div><div class="t l" style="left:1057px">70</div><div class="t l" style="left:1127px">75</div><div class="t l" style="left:1196px">80</div><div class="t l" style="left:1265px">85</div><div class="t l" style="left:1334px">90</div><div class="t l" style="left:1403px">95</div><div class="t l" style="left:1472px">100</div>
<!-- status -->
<div style="left:10px;top:985px;width:98px;height:20px;background:#dcc4c4;border:1px solid #999;border-right-color:#eee;border-bottom-color:#eee"></div>
<div style="left:10px;top:1006px;width:98px;height:22px;background:#fff;border:2px solid #aaa;border-bottom-color:#ddd;color:#111;font-family:'Liberation Mono',monospace;font-size:11px;line-height:20px;padding-left:4px;overflow:hidden;white-space:nowrap">Welcome to M</div>
<div style="left:113px;top:981px;width:1px;height:50px;background:#222"></div>
<div class="s" style="left:116px;top:985px;width:922px;height:22px;line-height:20px">1 Shape Selected</div>
<div class="s" style="left:116px;top:1010px;width:1227px;height:22px;line-height:20px;border-top:1px solid #111;border-left:1px solid #111">Ok</div>
<div class="t" style="left:1121px;top:989px;color:#999">X:</div>
<div class="f" style="left:1132px;top:985px;width:58px;height:21px;line-height:21px">-838,781m</div>
<div class="t" style="left:1204px;top:989px;color:#999">Y:</div>
<div class="f" style="left:1214px;top:985px;width:58px;height:21px;line-height:21px">-1147,319r</div>
<div class="t" style="left:1286px;top:989px;color:#999">Z:</div>
<div class="f" style="left:1296px;top:985px;width:58px;height:21px;line-height:21px">1755,476m</div>
<div class="s" style="left:1368px;top:985px;width:99px;height:21px;padding-left:5px;padding-top:2px">Grid = 10,0mm</div>
<div class="s" style="left:1368px;top:1010px;width:99px;height:21px;padding-left:5px;padding-top:2px">Add Time Tag</div>
<div style="left:1471px;top:984px;width:44px;height:44px;background:#444;border:1px solid #333;border-right-color:#161616;border-bottom-color:#161616"></div>
<div class="b" style="left:1519px;top:984px;width:47px;height:22px;line-height:19px">Auto Key</div>
<div class="b" style="left:1519px;top:1007px;width:47px;height:21px;line-height:18px">Set Key</div>
<div class="dd" style="left:1570px;top:985px;width:114px;height:20px;line-height:15px;font-size:11px;background:linear-gradient(#fff,#c8c8c8);padding-top:1px">Selected</div>
<div class="b" style="left:1595px;top:1007px;width:90px;height:21px;line-height:18px;border:1px solid #333;border-bottom:2px solid #111;border-right:2px solid #111">Key Filters...</div>
<div class="f" style="left:1717px;top:1007px;width:25px;height:21px;line-height:19px">0</div>
<svg style="position:absolute;left:0;top:0" width="1742" height="1047"><path d="M1669 993 h8 l-4 5z" fill="#111"/>
<circle cx="1486" cy="1005" r="4.2" fill="none" stroke="#111" stroke-width="2"/><path d="M1490 1005 h15 v5 M1499 1005 v4" stroke="#111" stroke-width="2" fill="none"/></svg>
<!-- bottom edge & taskbar -->
<div style="left:0;top:1032px;width:1742px;height:15px;background:linear-gradient(#ccd6dc 0,#ccd6dc 1px,#222c34 1px,#222c34 5px,#b4c0c8 5px,#b4c0c8 6px,#2a3640 6px,#2a3640 8px,#6c8294 8px,#5a7082 100%)"></div>
<div style="left:12px;top:1043px;width:28px;height:8px;border-radius:14px 14px 0 0;background:#3f5d7a;border:1px solid #c8d8e4"></div>
<div style="left:122px;top:1041px;width:58px;height:8px;background:linear-gradient(#c4cace,#8c98a0);border-radius:3px 3px 0 0"></div>
<div style="left:184px;top:1041px;width:58px;height:8px;background:linear-gradient(#c4cace,#8c98a0);border-radius:3px 3px 0 0"></div>
<div style="left:246px;top:1041px;width:58px;height:8px;background:linear-gradient(#f0f4f4,#c0d0d0);border-radius:3px 3px 0 0"></div>
<div style="left:308px;top:1041px;width:58px;height:8px;background:linear-gradient(#c4cace,#8c98a0);border-radius:3px 3px 0 0"></div>
<div style="left:370px;top:1041px;width:58px;height:8px;background:linear-gradient(#c4cace,#8c98a0);border-radius:3px 3px 0 0"></div>
<div style="left:432px;top:1041px;width:58px;height:8px;background:linear-gradient(#c4cace,#8c98a0);border-radius:3px 3px 0 0"></div>
<div style="left:147px;top:1045px;width:8px;height:2px;background:#c84040"></div>
<div style="left:260px;top:1043px;width:31px;height:4px;background:#4f9c9c"></div>
<div style="left:328px;top:1045px;width:5px;height:2px;background:#c84040"></div>
<div style="left:392px;top:1045px;width:16px;height:2px;background:#d82020"></div>
<div style="left:445px;top:1043px;width:28px;height:4px;background:#2a9ae0"></div>
</div>
<script>
(function(){
var x0=310,y0=168,x1=1010,y1=179,x2=1049,y2=668,x3=377,y3=820;
var dx1=x1-x2,dx2=x3-x2,dy1=y1-y2,dy2=y3-y2,sx=x0-x1+x2-x3,sy=y0-y1+y2-y3;
var den=dx1*dy2-dx2*dy1,g=(sx*dy2-dx2*sy)/den,h=(dx1*sy-sx*dy1)/den;
var a=x1-x0+g*x1,b=x3-x0+h*x3,d=y1-y0+g*y1,e=y3-y0+h*y3;
function p(u,v){var w=g*u+h*v+1;return ((a*u+b*v+x0)/w).toFixed(1)+' '+((d*u+e*v+y0)/w).toFixed(1);}
var s='',N=35,M=24,i;
for(i=1;i<N;i++)s+='M'+p(i/N,0)+'L'+p(i/N,1);
for(i=1;i<M;i++)s+='M'+p(0,i/M)+'L'+p(1,i/M);
var el=document.createElementNS('http://www.w3.org/2000/svg','path');
el.setAttribute('d',s);document.getElementById('grid').appendChild(el);
})();
</script>
</body></html>
